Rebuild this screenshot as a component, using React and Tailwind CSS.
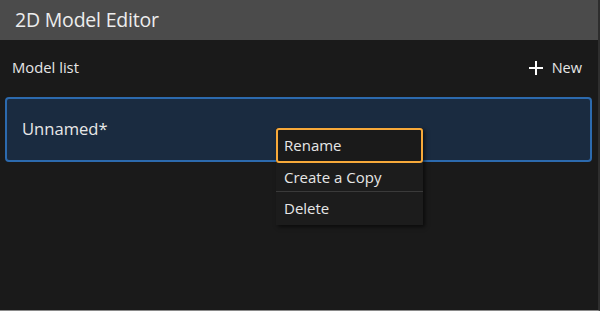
import React from 'react'

const PlusIcon = () => (
  <svg width="16" height="16" viewBox="0 0 16 16" className="text-white">
    <path d="M8 1v14M1 8h14" stroke="currentColor" strokeWidth="2" />
  </svg>
)

const ContextMenu = () => {
  return (
    <div className="absolute left-[276px] top-[128px] w-[147px] bg-[#1c1c1c] shadow-[2px_2px_4px_rgba(0,0,0,0.6)] text-[15px] text-[#e6e6e6]">
      <div className="h-[35px] flex items-center px-[6px] border-2 border-[#f7a93a] rounded-[3px] bg-[#1a1a1a]">Rename</div>
      <div className="h-[29px] flex items-center px-[8px] border-b border-[#3a3a3a]">Create a Copy</div>
      <div className="h-[33px] flex items-center px-[8px]">Delete</div>
    </div>
  )
}

const App = () => {
  return (
    <div className="relative w-[600px] h-[311px] bg-[#1a1a1a] overflow-hidden font-['Open_Sans',sans-serif] border-r-2 border-r-[#2e2e2e] border-b border-b-[#8a8a8a]">
      <div className="h-10 bg-[#4b4b4b] flex items-center pl-[15px]">
        <h1 className="text-[19.5px] text-[#ededed] tracking-[-0.2px]">2D Model Editor</h1>
      </div>
      <div className="px-[6px]">
        <div className="h-[57px] flex items-center justify-between pl-[6px] pr-[10px] pb-[2px]">
          <span className="text-[14.8px] text-[#e6e6e6]">Model list</span>
          <button className="flex items-center gap-[8px] text-[14.5px] text-[#e6e6e6]">
            <PlusIcon />
            <span>New</span>
          </button>
        </div>
        <div className="h-[65px] w-[587px] -ml-[1px] rounded-[4px] border-2 border-[#2c6aae] bg-[#1a2b40] flex items-center pl-[15px]">
          <span className="text-[16.6px] text-[#e8e8e8]">Unnamed*</span>
        </div>
      </div>
      <ContextMenu />
    </div>
  )
}

export default App
